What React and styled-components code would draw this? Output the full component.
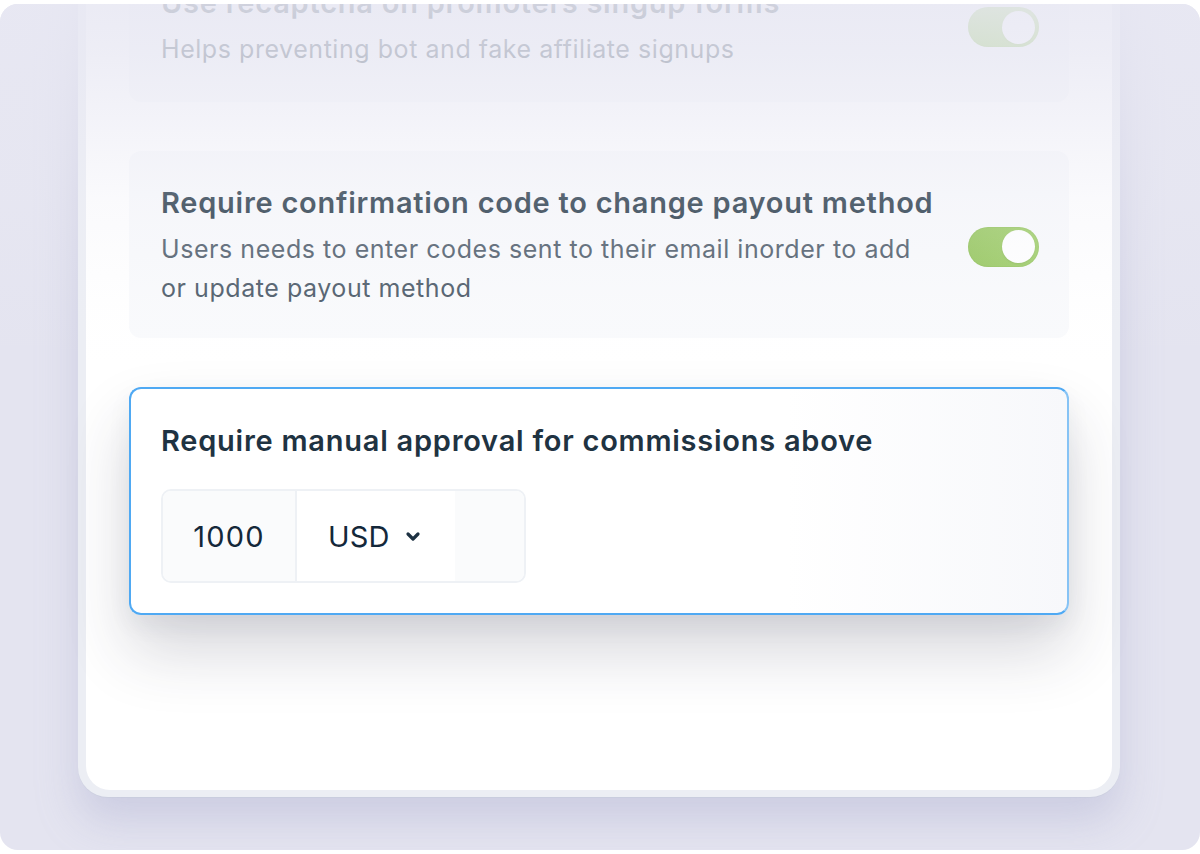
import React from "react";
import styled, { createGlobalStyle } from "styled-components";

const Global = createGlobalStyle`
  * { box-sizing: border-box; }
  html, body { margin: 0; padding: 0; background: #ffffff; }
  body { font-family: "Inter", "Noto Sans", sans-serif; -webkit-font-smoothing: antialiased; }
`;

const Stage = styled.div`
  position: relative;
  margin-top: 4px;
  width: 1200px;
  height: 846px;
  border-radius: 18px;
  background: #e4e4f0;
  overflow: hidden;
  display: flex;
  flex-direction: column;
  align-items: flex-start;
`;

const Fade = styled.div`
  position: absolute;
  left: 0;
  top: 0;
  right: 0;
  height: 380px;
  pointer-events: none;
  z-index: 2;
  background: linear-gradient(
    to bottom,
    rgba(232, 232, 243, 0.88) 0px,
    rgba(232, 232, 243, 0.76) 50px,
    rgba(236, 236, 245, 0.26) 196px,
    rgba(240, 240, 248, 0.06) 300px,
    rgba(240, 240, 248, 0) 360px
  );
`;

const Frame = styled.div`
  margin: -101px 0 0 78px;
  width: 1042px;
  padding: 8px 8px 7px;
  border-radius: 30px;
  background: #eceef4;
  box-shadow: 0 24px 40px rgba(160, 164, 200, 0.35), 0 1px 0 #dcdfe8;
`;

const Panel = styled.div`
  border-radius: 24px;
  background: #ffffff;
  padding: 43px 43px 175px;
  display: flex;
  flex-direction: column;
  gap: 49px;
`;

const SettingCard = styled.div`
  display: flex;
  align-items: center;
  gap: 28px;
  padding: ${(p) => (p.$first ? "31px 30px 33px 32px" : "34px 30px 30px 32px")};
  border-radius: 12px;
  background: #f9fafc;
`;

const SettingText = styled.div`
  flex: 1;
  display: flex;
  flex-direction: column;
  gap: 9px;
`;

const Title = styled.div`
  font-size: 29px;
  line-height: 36px;
  font-weight: 600;
  color: #1f3342;
  letter-spacing: 0.75px;
  white-space: nowrap;
`;

const Desc = styled.div`
  font-size: 25px;
  line-height: 39px;
  font-weight: 400;
  color: #4d5b69;
  letter-spacing: 0.55px;
  padding-right: 10px;
`;

const Toggle = styled.div`
  flex: none;
  width: 71px;
  height: 40px;
  border-radius: 20px;
  background: linear-gradient(90deg, #95c65c, #9fce69);
  display: flex;
  align-items: center;
  justify-content: flex-end;
  padding: 0 4px;
  box-shadow: inset 0 0 0 1px rgba(120, 170, 70, 0.15);
`;

const Knob = styled.div`
  width: 33px;
  height: 33px;
  border-radius: 50%;
  background: #ffffff;
  box-shadow: 0 1px 2px rgba(0, 0, 0, 0.08);
`;

const ApprovalCard = styled.div`
  position: relative;
  z-index: 3;
  display: flex;
  flex-direction: column;
  align-items: flex-start;
  gap: 30px;
  padding: 34px 30px 30px 30px;
  border-radius: 12px;
  border: 2px solid #4fa9f3;
  border-right-color: #86c3f5;
  background: linear-gradient(90deg, #ffffff 70%, #f7f8fb);
  box-shadow: 0 36px 64px rgba(40, 44, 70, 0.19), 0 10px 24px rgba(40, 44, 70, 0.06);
`;

const InputGroup = styled.div`
  display: flex;
  height: 94px;
  border: 2px solid #eef1f5;
  border-radius: 10px;
  overflow: hidden;
`;

const Cell = styled.div`
  width: ${(p) => p.$w}px;
  display: flex;
  align-items: center;
  justify-content: ${(p) => (p.$center ? "center" : "flex-start")};
  padding-left: ${(p) => (p.$center ? 0 : 31)}px;
  gap: 15px;
  background: ${(p) => (p.$muted ? "#fafbfc" : "#ffffff")};
  border-right: ${(p) => (p.$divider ? "2px solid #eef1f5" : "none")};
  font-size: 29px;
  font-weight: 400;
  letter-spacing: ${(p) => (p.$center ? 1.2 : 0.2)}px;
  color: #14283a;
`;

const Chevron = () => (
  <svg width="16" height="11" viewBox="0 0 16 11" fill="none">
    <path d="M3 3 L8 8 L13 3" stroke="#1d3142" strokeWidth="3.2" strokeLinecap="round" strokeLinejoin="round" />
  </svg>
);

export default function App() {
  return (
    <>
      <Global />
      <Stage>
        <Fade />
        <Frame>
          <Panel>
            <SettingCard $first>
              <SettingText>
                <Title>Use recaptcha on promoters singup forms</Title>
                <Desc>Helps preventing bot and fake affiliate signups</Desc>
              </SettingText>
              <Toggle>
                <Knob />
              </Toggle>
            </SettingCard>
            <SettingCard>
              <SettingText>
                <Title>Require confirmation code to change payout method</Title>
                <Desc>Users needs to enter codes sent to their email inorder to add or update payout method</Desc>
              </SettingText>
              <Toggle>
                <Knob />
              </Toggle>
            </SettingCard>
            <ApprovalCard>
              <Title>Require manual approval for commissions above</Title>
              <InputGroup>
                <Cell $w={134} $center $muted $divider>1000</Cell>
                <Cell $w={158}>
                  USD
                  <Chevron />
                </Cell>
                <Cell $w={69} $muted />
              </InputGroup>
            </ApprovalCard>
          </Panel>
        </Frame>
      </Stage>
    </>
  );
}
